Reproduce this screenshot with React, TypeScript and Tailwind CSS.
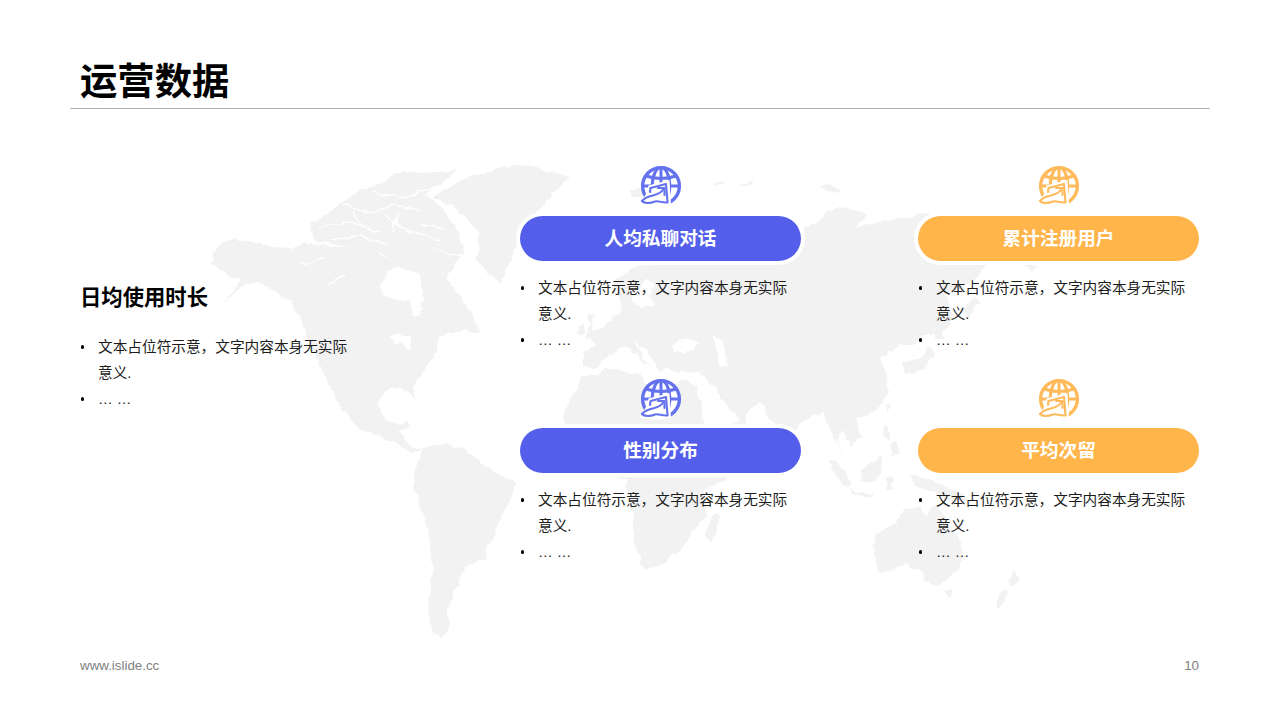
const land = [
  // North America
  "212,263 217,247 230,238 250,242 283,248 312,243 340,247 365,250 385,255 413,243 460,257 447,277 470,310 480,333 462,330 440,337 437,352 425,367 423,373 413,387 416,402 410,393 400,388 385,390 378,405 385,420 400,425 408,419 410,428 400,432 412,447 422,450 412,452 395,443 375,435 355,425 340,407 327,380 313,350 303,323 290,300 260,283 247,283 223,303 240,282 228,275",
  // Arctic Canada
  "313,240 310,222 337,207 357,193 380,183 397,173 460,170 445,180 425,195 440,205 460,235 465,257 420,245 395,255 360,250",
  // Greenland
  "433,198 460,180 497,168 530,165 570,177 553,193 533,217 520,240 510,260 500,285 487,273 477,257 480,233 463,213 447,203",
  // South America
  "422,450 437,443 460,447 481,463 515,483 510,500 489,543 485,560 464,567 455,590 447,613 450,625 443,640 432,632 428,607 433,567 428,530 414,487 416,470",
  // Africa
  "563,427 565,410 577,390 583,375 598,375 607,368 627,373 640,375 645,383 667,387 687,381 697,387 702,410 702,430 715,445 745,452 725,480 705,490 707,515 690,535 680,550 660,565 645,571 635,545 632,505 625,480 600,470 575,462 563,440",
  // Eurasia
  "583,367 583,352 595,345 590,335 600,328 612,320 622,310 620,298 612,285 630,268 660,262 690,258 745,250 801,232 837,207 867,213 853,227 880,222 930,213 1000,225 1060,235 1040,262 1030,272 1022,262 990,262 975,280 945,295 955,315 940,335 922,335 915,345 900,345 893,350 880,360 886,372 893,373 887,373 888,393 877,410 857,420 860,437 850,447 843,430 837,440 847,467 838,445 828,425 823,412 805,420 797,428 790,445 777,427 760,403 748,410 745,428 722,430 740,420 725,405 717,390 700,373 680,372 668,368 660,372 652,358 635,340 645,360 650,368 640,358 625,345 610,355 597,367",
  // UK, Ireland, Iceland
  "588,313 594,316 592,326 598,335 585,338 590,326", "578,326 584,324 584,334 577,335", "628,192 640,188 650,191 642,197 632,197",
  // Arctic islands
  "713,184 722,182 724,185 714,186", "738,184 753,182 752,185 739,186", "820,186 830,183 842,192 832,193", "660,222 672,218 676,222 664,226",
  // Madagascar
  "718,512 721,516 716,535 710,542 706,535 709,522",
  // Japan, Sakhalin, Taiwan, Philippines
  "903,362 920,360 930,345 935,355 925,368 905,375", "934,335 942,333 944,340 936,342", "963,310 975,297 980,303 968,318", "887,404 890,405 888,411 886,410", "885,425 890,430 888,441 884,436", "895,440 900,452 893,455 891,446",
  // Indonesia and New Guinea
  "828,460 835,462 852,483 848,487 838,478", "860,470 875,460 882,457 881,475 870,483 862,483", "850,490 875,495 875,498 850,495", "885,478 893,476 890,483 893,490 887,490", "910,475 930,480 955,490 968,500 950,500 930,492 915,485",
  // Australia, Tasmania, New Zealand
  "872,545 878,532 898,520 905,510 920,507 925,518 935,503 945,520 961,540 963,560 950,578 938,585 925,580 918,570 905,565 880,572 875,560", "945,590 952,590 949,597", "1013,572 1020,580 1012,587 1009,582", "1005,590 1008,595 998,609 994,604",
];

const water = [
  "380,287 387,273 400,267 420,273 423,300 420,317 413,317 410,300 393,300 383,293",
  "390,337 400,333 413,338 408,350 402,342 393,345",
  "630,300 638,290 645,280 655,285 650,295 655,305 640,307",
  "670,345 685,337 700,342 692,352 675,352",
  "713,337 722,337 725,350 730,365 720,367 717,352",
];

const channels = [
  "M318 228 L350 222 L378 232", "M345 205 L372 213 L395 205 L420 210", "M372 190 L400 198 L438 186", "M385 215 L410 232 L440 240", "M330 240 L360 235 L388 245", "M300 265 L326 258", "M328 285 L344 275", "M420 225 L445 228", "M352 212 L365 228", "M398 212 L392 232",
];

function GlobeIcon({ color }: { color: string }) {
  return (
    <svg width="42" height="42" viewBox="0 0 42 42" fill="none" className="block">
      <circle cx="21" cy="21" r="18.4" stroke={color} strokeWidth="3.4" fill="white" />
      <g stroke={color} strokeWidth="3">
        <ellipse cx="21" cy="21" rx="8.8" ry="18.4" />
        <path d="M21 2.5V39.5" />
        <path d="M6 11Q21 16 36 11" />
        <path d="M2.5 21H39.5" />
      </g>
      <path d="M0 40L7 27L8.5 20.5L29.5 15L31 40L20 42Z" fill="white" />
      <g stroke={color} strokeWidth="2.1" strokeLinejoin="round" strokeLinecap="round">
        <path d="M10 27L10.5 23L26 19L27.5 37" />
        <path d="M2 36C9 28 18 33 23.5 24" />
        <path d="M18 23L24.5 23L24.5 30" />
        <path d="M2 36C4 38.5 10 38.5 15 36.5C18 35.5 22 38 27.5 37.5" />
      </g>
    </svg>
  );
}

function Bullets() {
  return (
    <div className="w-[281px] text-[14.67px] leading-[26px] text-[#1c1c1c]">
      <div className="flex">
        <div className="w-[18px] shrink-0 pt-[11px] pl-[0.5px]">
          <div className="h-[3.5px] w-[3.5px] rounded-full bg-black" />
        </div>
        <p className="w-[255px]">文本占位符示意，文字内容本身无实际意义.</p>
      </div>
      <div className="flex">
        <div className="w-[18px] shrink-0 pt-[11px] pl-[0.5px]">
          <div className="h-[3.5px] w-[3.5px] rounded-full bg-black" />
        </div>
        <p>… …</p>
      </div>
    </div>
  );
}

function Card({ label, fill, icon, lower }: { label: string; fill: string; icon: string; lower?: boolean }) {
  return (
    <div className="flex w-[281px] flex-col">
      <div className={lower ? "flex justify-center pt-[1px]" : "flex justify-center"}>
        <GlobeIcon color={icon} />
      </div>
      <div
        style={{ backgroundColor: fill }}
        className={
          lower
            ? "mt-[8px] flex h-[45px] items-center justify-center rounded-full text-[18.67px] font-bold text-white ring-4 ring-white"
            : "mt-[9px] flex h-[45px] items-center justify-center rounded-full text-[18.67px] font-bold text-white ring-4 ring-white"
        }
      >
        {label}
      </div>
      <div className="mt-[14px]">
        <Bullets />
      </div>
    </div>
  );
}

const BLUE = "#535fea";
const ORANGE = "#ffb54a";
const BLUE_ICON = "#6472ee";
const ORANGE_ICON = "#ffba5c";

export default function App() {
  return (
    <div className="relative flex h-[720px] w-[1280px] flex-col overflow-hidden bg-white font-['Liberation_Sans','Noto_Sans_CJK_SC',sans-serif]">
      <svg viewBox="0 0 1280 720" className="absolute inset-0 h-[720px] w-[1280px]" fill="#f2f2f2">
        <defs>
          <filter id="coast" x="0" y="0" width="1280" height="720" filterUnits="userSpaceOnUse">
            <feTurbulence type="fractalNoise" baseFrequency="0.09" numOctaves="3" seed="4" result="n" />
            <feDisplacementMap in="SourceGraphic" in2="n" scale="7" xChannelSelector="R" yChannelSelector="G" />
          </filter>
        </defs>
        <g filter="url(#coast)">
          <rect width="1280" height="720" fill="white" />
          {land.map((p) => (
            <polygon key={p} points={p} />
          ))}
          {water.map((p) => (
            <polygon key={p} points={p} fill="white" />
          ))}
          {channels.map((d) => (
            <path key={d} d={d} fill="none" stroke="white" strokeWidth="1.6" />
          ))}
        </g>
      </svg>

      <header className="relative mx-[70px] h-[109px] shrink-0 border-b border-[#b0b0b0] px-[10px] pt-[60px]">
        <h1 className="text-[37.33px] font-bold leading-[44px] text-black">运营数据</h1>
      </header>

      <main className="relative flex flex-1">
        <section className="w-[520px] shrink-0 pl-[80px] pt-[174px]">
          <h2 className="text-[21.33px] font-bold leading-[30px] text-black">日均使用时长</h2>
          <div className="mt-[21px]">
            <Bullets />
          </div>
        </section>
        <section className="grid grid-cols-[281px_281px] gap-x-[117px] gap-y-[24px] content-start pt-[56px]">
          <Card label="人均私聊对话" fill={BLUE} icon={BLUE_ICON} />
          <Card label="累计注册用户" fill={ORANGE} icon={ORANGE_ICON} />
          <Card label="性别分布" fill={BLUE} icon={BLUE_ICON} lower />
          <Card label="平均次留" fill={ORANGE} icon={ORANGE_ICON} lower />
        </section>
      </main>

      <footer className="relative flex h-[64px] shrink-0 justify-between px-[81px] text-[13.33px] leading-[20px] text-[#808080]">
        <span className="-ml-px">www.islide.cc</span>
        <span>10</span>
      </footer>
    </div>
  );
}
